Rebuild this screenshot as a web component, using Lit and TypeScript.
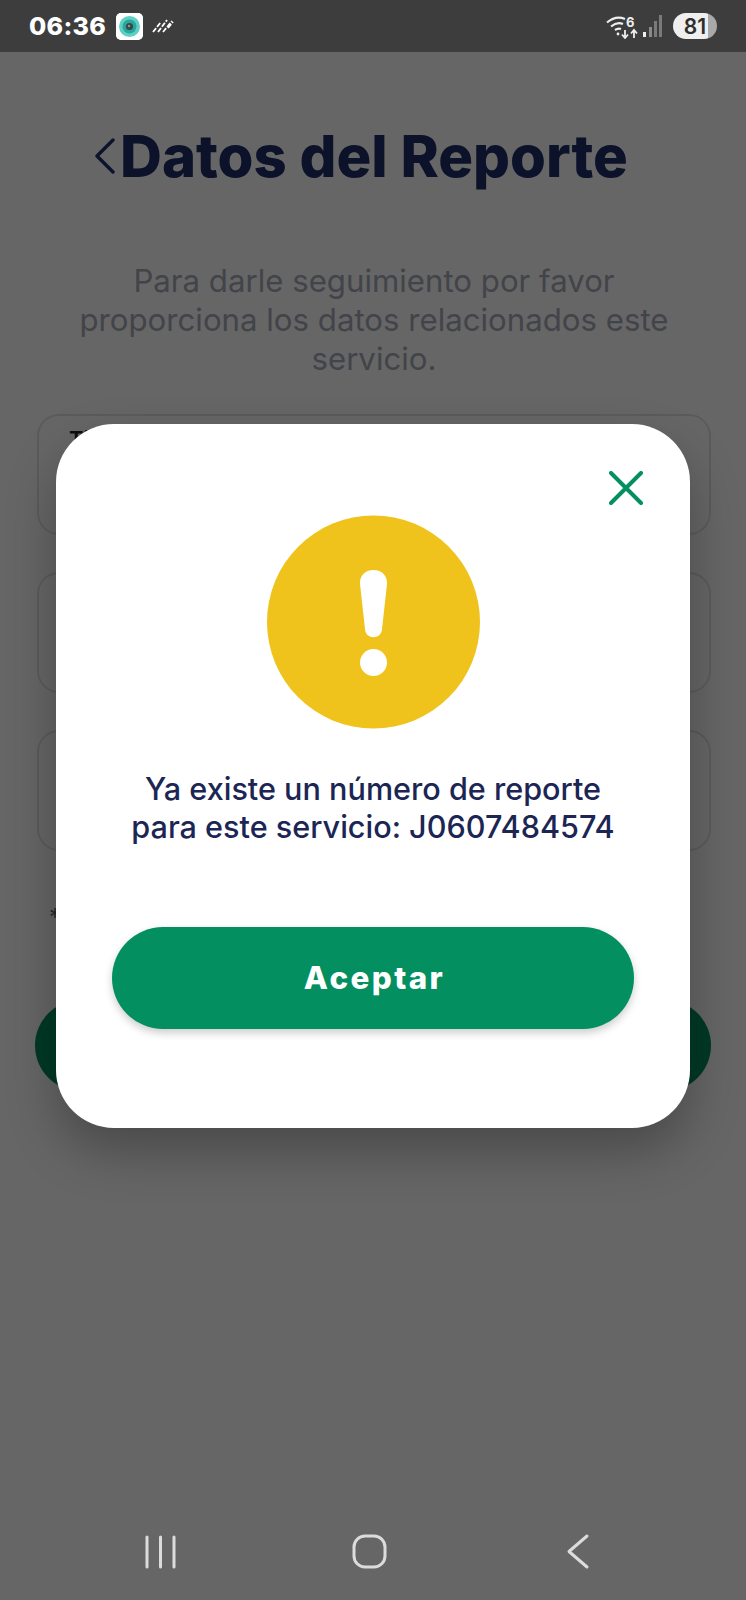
import { LitElement, html, css } from "lit";
import { customElement } from "lit/decorators.js";

@customElement("app-root")
export class AppRoot extends LitElement {
  static styles = css`
    :host { display: block; font-family: Inter, "Liberation Sans", sans-serif; }
    .page { position: relative; width: 746px; height: 1600px; background: #fff; overflow: hidden; display: flex; flex-direction: column; }

    .status { position: relative; z-index: 3; height: 52px; flex: none; background: #3d3d3d; display: flex; align-items: center; padding: 0 29px; box-sizing: border-box; color: #fff; }
    .time { font-size: 25px; font-weight: 800; letter-spacing: 0.3px; width: 87px; }
    .app { width: 27px; height: 27px; background: #fff; border-radius: 5px; display: block; }
    .rain { margin-left: 9px; display: block; }
    .spacer { flex: 1; }
    .wifi { display: block; margin-right: 3px; }
    .signal { display: block; margin-right: 10px; }
    .batt { width: 44px; height: 26px; border-radius: 13px; background: linear-gradient(90deg, #efefef 0 80%, #a9a9a9 80%); color: #2e2e2e; font-size: 21px; font-weight: 600; display: flex; align-items: center; justify-content: center; }

    .content { flex: 1; display: flex; flex-direction: column; padding: 69px 35px 0 37px; }
    .head { display: flex; align-items: center; gap: 5px; height: 70px; padding-left: 58px; color: #1f3370; }
    .head svg { display: block; flex: none; }
    h1 { margin: 0; font-size: 58px; line-height: 70px; font-weight: 800; color: #1f2f66; white-space: nowrap; }
    .sub { margin: 71px 0 35px; font-size: 31.2px; line-height: 39px; text-align: center; color: #a6aab8; }
    .field { height: 121px; box-sizing: border-box; border: 2px solid #e4e4e4; border-radius: 22px; margin-bottom: 37px; padding: 10px 30px; font-size: 22px; font-weight: 600; color: #222; }
    .note { margin-top: 15px; padding-left: 12px; font-size: 24px; color: #666; height: 30px; }
    .cta { margin-top: 67px; margin-left: -2px; width: 676px; height: 91px; border-radius: 46px; background: #038f60; }

    .scrim { position: absolute; inset: 0; z-index: 1; background: rgba(0, 0, 0, 0.6); display: flex; justify-content: center; align-items: flex-start; padding-top: 424px; box-sizing: border-box; }
    .modal { width: 634px; height: 704px; background: #fff; border-radius: 58px; box-shadow: 0 24px 50px rgba(0, 0, 0, 0.28); display: flex; flex-direction: column; align-items: center; padding-top: 47px; box-sizing: border-box; }
    .close { align-self: flex-end; margin-right: 47px; display: block; }
    .alert { margin-top: 10px; display: block; }
    .msg { margin: 41px 0 0; font-size: 30.6px; line-height: 38px; font-weight: 500; text-align: center; color: #1b2654; }
    .ok { margin-top: 81px; width: 522px; height: 102px; border: 0; padding: 0 0 0 3px; border-radius: 51px; background: #038f60; color: #fff; font: 800 31.4px Inter, "Liberation Sans", sans-serif; letter-spacing: 2.4px; box-shadow: 0 4px 9px rgba(0, 0, 0, 0.2); }

    .nav { position: relative; z-index: 3; height: 100px; flex: none; }
    .nav svg { display: block; }
  `;

  render() {
    return html`
      <div class="page">
        <div class="status">
          <span class="time">06:36</span>
          <svg class="app" viewBox="0 0 27 27">
            <rect width="27" height="27" rx="5" fill="#fff" />
            <circle cx="13.5" cy="13.5" r="10.5" fill="#62cfc4" />
            <circle cx="13.5" cy="13.5" r="7" fill="#2aa79c" />
            <circle cx="13.5" cy="13.5" r="3.6" fill="#37474a" />
            <circle cx="13" cy="13" r="1.2" fill="#8a9a9a" />
          </svg>
          <svg class="rain" width="22" height="14" viewBox="0 0 22 14" fill="none" stroke="#fff" stroke-width="1.8" stroke-dasharray="5 1.5">
            <path d="M1 13 L9 3" /><path d="M6 13 L15 1" /><path d="M11 13 L20 2" /><path d="M16 9 L21 3" />
          </svg>
          <span class="spacer"></span>
          <svg class="wifi" width="34" height="26" viewBox="0 0 34 26" fill="none" stroke="#eee" stroke-width="2.2">
            <path d="M1 9.5 Q10 2 19 6" /><path d="M5 13.5 Q11 8.5 17 11" /><path d="M9 17 Q12 15 15 16" />
            <circle cx="12" cy="21" r="1.4" fill="#eee" stroke="none" />
            <text x="20" y="14" font-size="13" font-weight="700" fill="#eee" stroke="none" font-family="Inter">6</text>
            <path d="M19 17 V24.5 M16 21.5 L19 25 L22 21.5" stroke-width="1.8" />
            <path d="M28 25 V17.5 M25 20.5 L28 17 L31 20.5" stroke-width="1.8" />
          </svg>
          <svg class="signal" width="20" height="22" viewBox="0 0 20 22">
            <rect x="0" y="17" width="3" height="5" fill="#eee" />
            <rect x="6" y="12" width="3" height="10" fill="#8a8a8a" />
            <rect x="11" y="6" width="3" height="16" fill="#7a7a7a" />
            <rect x="16" y="0" width="3" height="22" fill="#7a7a7a" />
          </svg>
          <div class="batt">81</div>
        </div>

        <div class="content">
          <div class="head">
            <svg width="20" height="36" viewBox="0 0 20 36" fill="none" stroke="currentColor" stroke-width="3.4" stroke-linecap="round" stroke-linejoin="round"><path d="M18 2 L2 18 L18 34" /></svg>
            <h1>Datos del Reporte</h1>
          </div>
          <p class="sub">Para darle seguimiento por favor<br />proporciona los datos relacionados este<br />servicio.</p>
          <div class="field">Tipo de servicio</div>
          <div class="field"></div>
          <div class="field"></div>
          <div class="note">* Campos obligatorios</div>
          <div class="cta"></div>
        </div>

        <div class="scrim">
          <div class="modal">
            <svg class="close" width="34" height="34" viewBox="0 0 34 34" stroke="#038f60" stroke-width="4" stroke-linecap="round"><path d="M2 2 L32 32 M32 2 L2 32" /></svg>
            <svg class="alert" width="213" height="214" viewBox="0 0 213 214">
              <circle cx="106.5" cy="107" r="106.5" fill="#f0c31c" />
              <path d="M106.5 55 C115 55 120.5 61 120 69 L115 114 C114.5 125 98.5 125 98 114 L93 69 C92.5 61 98 55 106.5 55 Z" fill="#fff" />
              <circle cx="106.5" cy="147.5" r="13.5" fill="#fff" />
            </svg>
            <p class="msg">Ya existe un número de reporte<br />para este servicio: J0607484574</p>
            <button class="ok">Aceptar</button>
          </div>
        </div>

        <div class="nav">
          <svg width="746" height="100" viewBox="0 0 746 100" fill="none" stroke="#dcdcdc" stroke-width="3" stroke-linecap="round" stroke-linejoin="round">
            <path d="M147 37 V67 M160.5 37 V67 M174 37 V67" />
            <rect x="354" y="36" width="31" height="31" rx="11" />
            <path d="M587 36 L569 51.5 L587 67" />
          </svg>
        </div>
      </div>
    `;
  }
}
